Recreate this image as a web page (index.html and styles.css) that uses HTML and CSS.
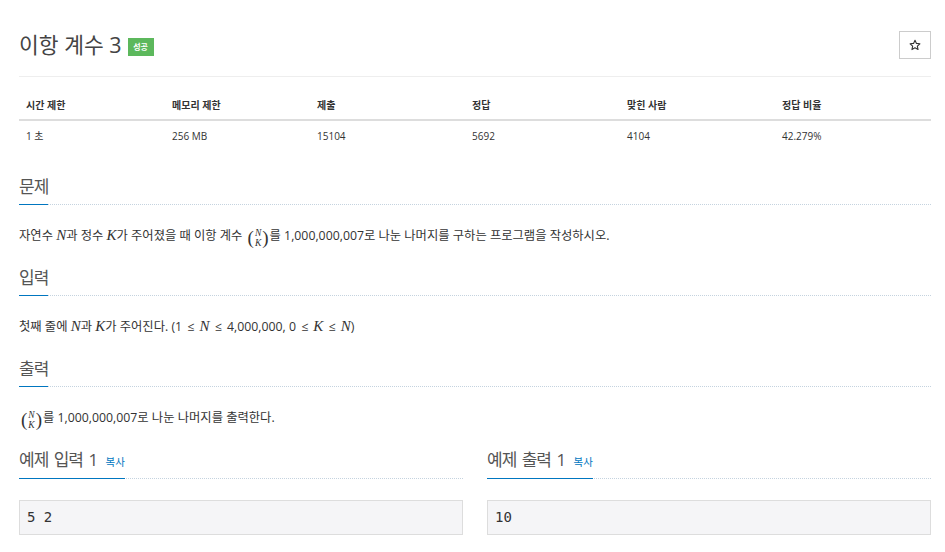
FILE: index.html
```html
<!DOCTYPE html>
<html lang="ko">
<head>
<meta charset="utf-8">
<title>이항 계수 3</title>
<link rel="stylesheet" href="styles.css">
</head>
<body>
<div class="page">
  <div class="page-header">
    <h1 class="title">이항 계수 3 <span class="badge">성공</span></h1>
    <button class="star" type="button" aria-label="즐겨찾기"><svg width="12" height="12" viewBox="0 0 24 24"><path d="M12 2.5l2.9 6.3 6.9.8-5.1 4.7 1.4 6.8L12 17.7l-6.1 3.4 1.4-6.8-5.1-4.7 6.9-.8z" fill="none" stroke="#333" stroke-width="2.2" stroke-linejoin="round"/></svg></button>
  </div>

  <div class="info-table">
    <div class="cell th">시간 제한</div>
    <div class="cell th">메모리 제한</div>
    <div class="cell th">제출</div>
    <div class="cell th">정답</div>
    <div class="cell th">맞힌 사람</div>
    <div class="cell th">정답 비율</div>
    <div class="cell td">1 초</div>
    <div class="cell td">256 MB</div>
    <div class="cell td">15104</div>
    <div class="cell td">5692</div>
    <div class="cell td">4104</div>
    <div class="cell td">42.279%</div>
  </div>

  <section class="section">
    <div class="headline"><h2>문제</h2></div>
    <p class="text">자연수 <i class="m">N</i>과 정수 <i class="m">K</i>가 주어졌을 때 이항 계수 <span class="binom"><span class="paren">(</span><span class="stack"><i>N</i><i>K</i></span><span class="paren">)</span></span>를 1,000,000,007로 나눈 나머지를 구하는 프로그램을 작성하시오.</p>
  </section>

  <section class="section">
    <div class="headline"><h2>입력</h2></div>
    <p class="text">첫째 줄에 <i class="m">N</i>과 <i class="m">K</i>가 주어진다. (1 <span class="op">≤</span> <i class="m">N</i> <span class="op">≤</span> 4,000,000, 0 <span class="op">≤</span> <i class="m">K</i> <span class="op">≤</span> <i class="m">N</i>)</p>
  </section>

  <section class="section">
    <div class="headline"><h2>출력</h2></div>
    <p class="text"><span class="binom"><span class="paren">(</span><span class="stack"><i>N</i><i>K</i></span><span class="paren">)</span></span>를 1,000,000,007로 나눈 나머지를 출력한다.</p>
  </section>

  <div class="samples">
    <section class="sample">
      <div class="headline small"><h2>예제 입력 1 <a class="copy">복사</a></h2></div>
      <pre class="sample-data">5 2</pre>
    </section>
    <section class="sample">
      <div class="headline small"><h2>예제 출력 1 <a class="copy">복사</a></h2></div>
      <pre class="sample-data">10</pre>
    </section>
  </div>
</div>
</body>
</html>
```

FILE: styles.css
```css
* { box-sizing: border-box; }
html, body { margin: 0; padding: 0; background: #fff; }
body {
  font-family: "Open Sans", "Noto Sans CJK KR", sans-serif;
  color: #333;
}
.page { padding: 0 14px 0 19px; width: 945px; }

.page-header {
  display: flex;
  justify-content: space-between;
  align-items: center;
  padding-top: 31px;
  padding-bottom: 17px;
  border-bottom: 1px solid #eee;
}
.title {
  margin: 0;
  font-size: 21.5px;
  font-weight: 400;
  line-height: 28px;
  color: #444;
  display: flex;
  align-items: center;
}
.badge {
  display: inline-block;
  background: #5cb85c;
  color: #fff;
  font-size: 8px;
  font-weight: 700;
  line-height: 18px;
  height: 18px;
  width: 26px;
  text-align: center;
  margin-left: 6px;
  margin-top: 4px;
}
.star {
  width: 32px;
  height: 28px;
  border: 1px solid #ccc;
  background: #fff;
  padding: 0;
  display: flex;
  align-items: center;
  justify-content: center;
}

.info-table {
  display: grid;
  grid-template-columns: 146px 145px 155px 155px 155px 156px;
  margin-top: 12px;
  font-size: 10px;
}
.cell { padding: 0 7px; line-height: 17px; }
.th { font-weight: 700; border-bottom: 2px solid #ddd; padding-top: 8px; padding-bottom: 5px; }
.td { padding-top: 7px; padding-bottom: 7px; }

.section { margin-top: 20px; }
.section:first-of-type { margin-top: 23px; }
.headline { border-bottom: 1px dotted #c5d3df; }
.headline h2 {
  display: inline-block;
  margin: 0 0 -1px 0;
  font-size: 17px;
  font-weight: 400;
  line-height: 24px;
  padding-bottom: 5px;
  color: #555;
  border-bottom: 1px solid #0076c0;
  letter-spacing: -1px;
  word-spacing: 2px;
}
.text {
  margin: 21px 0 0 0;
  font-size: 12.3px;
  line-height: 20px;
  height: 20px;
}
.m {
  font-family: "Liberation Serif", serif;
  font-size: 15px;
  font-style: italic;
  line-height: 0;
}
.op { margin: 0 2px; }
.binom {
  display: inline-flex;
  align-items: center;
  height: 16px;
  vertical-align: -4px;
  font-family: "Liberation Serif", serif;
  margin: 0 1px 0 2px;
  line-height: 0;
}
.paren { font-size: 19px; line-height: 16px; }
.stack {
  display: inline-flex;
  flex-direction: column;
  font-size: 9.5px;
  line-height: 10px;
  align-items: center;
  padding: 0 1px;
}

.samples {
  display: grid;
  grid-template-columns: 1fr 1fr;
  gap: 24px;
  margin-top: 20px;
}
.headline.small h2 { padding-bottom: 4px; }
.copy {
  color: #0076c0;
  font-size: 10.5px;
  letter-spacing: 0;
  word-spacing: 0;
  margin-left: 3px;
}
.sample-data {
  margin: 21px 0 0 0;
  background: #f5f5f7;
  border: 1px solid #ddd;
  padding: 8px 7px;
  font-family: "DejaVu Sans Mono", monospace;
  font-size: 14px;
  line-height: 17px;
  color: #333;
  height: 35px;
}
```
